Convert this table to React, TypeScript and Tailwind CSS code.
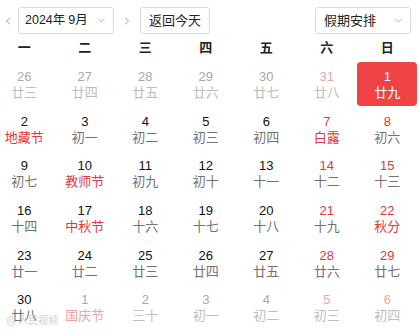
import { ChevronDown, ChevronLeft, ChevronRight } from "lucide-react";

type Day = {
  n: number;
  lunar: string;
  out?: boolean;
  weekend?: boolean;
  fest?: boolean;
  sel?: boolean;
};

const weekdays = ["一", "二", "三", "四", "五", "六", "日"];

const days: Day[] = [
  { n: 26, lunar: "廿三", out: true },
  { n: 27, lunar: "廿四", out: true },
  { n: 28, lunar: "廿五", out: true },
  { n: 29, lunar: "廿六", out: true },
  { n: 30, lunar: "廿七", out: true },
  { n: 31, lunar: "廿八", out: true, weekend: true },
  { n: 1, lunar: "廿九", sel: true },
  { n: 2, lunar: "地藏节", fest: true },
  { n: 3, lunar: "初一" },
  { n: 4, lunar: "初二" },
  { n: 5, lunar: "初三" },
  { n: 6, lunar: "初四" },
  { n: 7, lunar: "白露", weekend: true, fest: true },
  { n: 8, lunar: "初六", weekend: true },
  { n: 9, lunar: "初七" },
  { n: 10, lunar: "教师节", fest: true },
  { n: 11, lunar: "初九" },
  { n: 12, lunar: "初十" },
  { n: 13, lunar: "十一" },
  { n: 14, lunar: "十二", weekend: true },
  { n: 15, lunar: "十三", weekend: true },
  { n: 16, lunar: "十四" },
  { n: 17, lunar: "中秋节", fest: true },
  { n: 18, lunar: "十六" },
  { n: 19, lunar: "十七" },
  { n: 20, lunar: "十八" },
  { n: 21, lunar: "十九", weekend: true },
  { n: 22, lunar: "秋分", weekend: true, fest: true },
  { n: 23, lunar: "廿一" },
  { n: 24, lunar: "廿二" },
  { n: 25, lunar: "廿三" },
  { n: 26, lunar: "廿四" },
  { n: 27, lunar: "廿五" },
  { n: 28, lunar: "廿六", weekend: true },
  { n: 29, lunar: "廿七", weekend: true },
  { n: 30, lunar: "廿八" },
  { n: 1, lunar: "国庆节", out: true, fest: true },
  { n: 2, lunar: "三十", out: true },
  { n: 3, lunar: "初一", out: true },
  { n: 4, lunar: "初二", out: true },
  { n: 5, lunar: "初三", out: true, weekend: true },
  { n: 6, lunar: "初四", out: true, weekend: true },
];

const DayCell = ({ d }: { d: Day }) => {
  let numCls = "text-[#111]";
  let lunarCls = "text-[#727272]";
  if (d.out) {
    numCls = d.weekend ? "text-[#f0a3a3]" : "text-[#a8a8a8]";
    lunarCls = d.fest ? "text-[#f0a3a3]" : "text-[#bdbdbd]";
  } else {
    if (d.weekend) numCls = "text-[#e0383e]";
    if (d.fest) lunarCls = "text-[#e0383e]";
  }
  if (d.sel) {
    numCls = "text-white";
    lunarCls = "text-white";
  }
  return (
    <div className="flex h-[44.7px] items-center justify-center">
      <div
        className={`flex h-[44px] w-[60px] flex-col items-center justify-center rounded-[4px] ${
          d.sel ? "bg-[#ef4346]" : ""
        }`}
      >
        <span className={`text-[13px] leading-[16px] ${numCls}`}>{d.n}</span>
        <span className={`text-[13px] leading-[15px] ${lunarCls}`}>{d.lunar}</span>
      </div>
    </div>
  );
};

export default function App() {
  return (
    <div
      className="relative h-[332px] w-[419px] overflow-hidden bg-white"
      style={{ fontFamily: '"Liberation Sans", "Noto Sans CJK SC", sans-serif' }}
    >
      <div className="flex h-[34px] items-end">
        <div className="flex h-[27px] w-[18px] items-center pl-[2px] text-[#777]">
          <ChevronLeft size={12} strokeWidth={1.5} />
        </div>
        <div className="flex h-[27px] w-[96px] items-center justify-between rounded-[3px] border border-[#dcdcdc] pl-[6px] pr-[6px] text-[12.5px] text-[#222]">
          <span>
            2024年<span className="ml-[3px]">9月</span>
          </span>
          <ChevronDown size={11} strokeWidth={1.5} className="text-[#888]" />
        </div>
        <div className="flex h-[27px] w-[26px] items-center justify-center text-[#777]">
          <ChevronRight size={12} strokeWidth={1.5} />
        </div>
        <div className="flex h-[27px] w-[70px] items-center justify-center rounded-[3px] border border-[#dcdcdc] text-[13px] text-[#222]">
          返回今天
        </div>
        <div className="ml-auto mr-[8px] flex h-[27px] w-[96px] items-center justify-between rounded-[3px] border border-[#dcdcdc] pl-[8px] pr-[6px] text-[13px] text-[#222]">
          <span>假期安排</span>
          <ChevronDown size={11} strokeWidth={1.5} className="text-[#888]" />
        </div>
      </div>

      <div className="-ml-[6px] grid grid-cols-[repeat(7,60.5px)]">
        {weekdays.map((w) => (
          <div
            key={w}
            className="flex h-[28px] items-center justify-center text-[13px] font-bold text-[#222]"
          >
            {w}
          </div>
        ))}
        {days.map((d, i) => (
          <DayCell key={i} d={d} />
        ))}
      </div>

      <div className="absolute bottom-[4px] left-[6px] flex items-center gap-[2px] text-[10px] text-[#c8c8c8] opacity-80">
        <span>@</span>
        <span>人民视频</span>
      </div>
    </div>
  );
}
